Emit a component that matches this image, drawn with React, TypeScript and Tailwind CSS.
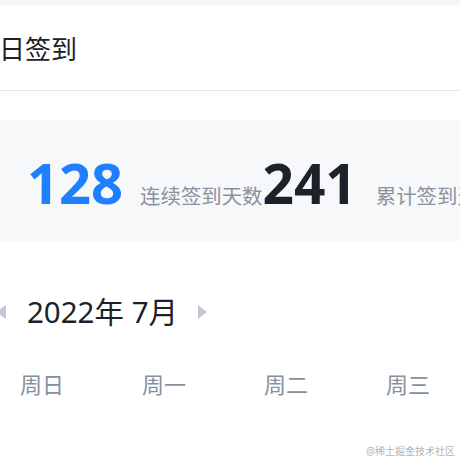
import React from "react";

const font = { fontFamily: '"Noto Sans", "Noto Sans CJK SC", sans-serif' };

export default function App() {
  const weeks = ["周日", "周一", "周二", "周三", "周四", "周五", "周六"];
  return (
    <div
      className="relative w-[460px] h-[460px] overflow-hidden bg-white"
      style={font}
    >
      <div className="h-[5px] bg-[#f4f5f5]" />
      <div className="h-[86px] flex items-center border-b border-[#e4e6eb]">
        <span className="ml-[-27px] mt-[2px] text-[26px] leading-none text-[#1d2129] whitespace-nowrap">
          每日签到
        </span>
      </div>
      <div className="h-[29px]" />
      <div className="h-[121px] bg-[#f7f8fa] flex items-center whitespace-nowrap">
        <div className="flex items-baseline ml-[27px] mt-[3px]">
          <span className="text-[56px] font-bold text-[#1e80ff] leading-none">128</span>
          <span className="ml-[17px] text-[20.4px] text-[#8a919f] leading-none">连续签到天数</span>
          <span className="text-[55px] font-bold text-[#1d2129] leading-none">241</span>
          <span className="ml-[19px] text-[20.4px] text-[#8a919f] leading-none">累计签到天数</span>
        </div>
      </div>
      <div className="flex items-center h-[40px] mt-[51px] whitespace-nowrap">
        <svg width="14" height="16" viewBox="0 0 14 16" className="ml-[-7px]">
          <path d="M13 1 L3 8 L13 15 Z" fill="#c2c8d1" />
        </svg>
        <span className="ml-[20px] text-[29.5px] leading-none text-[#1d2129]">2022年 7月</span>
        <svg width="12" height="16" viewBox="0 0 12 16" className="ml-[19px]">
          <path d="M1 1 L10 8 L1 15 Z" fill="#c2c8d1" />
        </svg>
      </div>
      <div className="flex mt-[41px] ml-[-19px] whitespace-nowrap">
        {weeks.map((w) => (
          <div key={w} className="w-[122px] shrink-0 text-center text-[22px] leading-none text-[#86909c]">
            {w}
          </div>
        ))}
      </div>
      <div className="absolute right-[5px] bottom-[4px] text-[10px] leading-none text-[#b5b5b5]">
        @稀土掘金技术社区
      </div>
    </div>
  );
}
